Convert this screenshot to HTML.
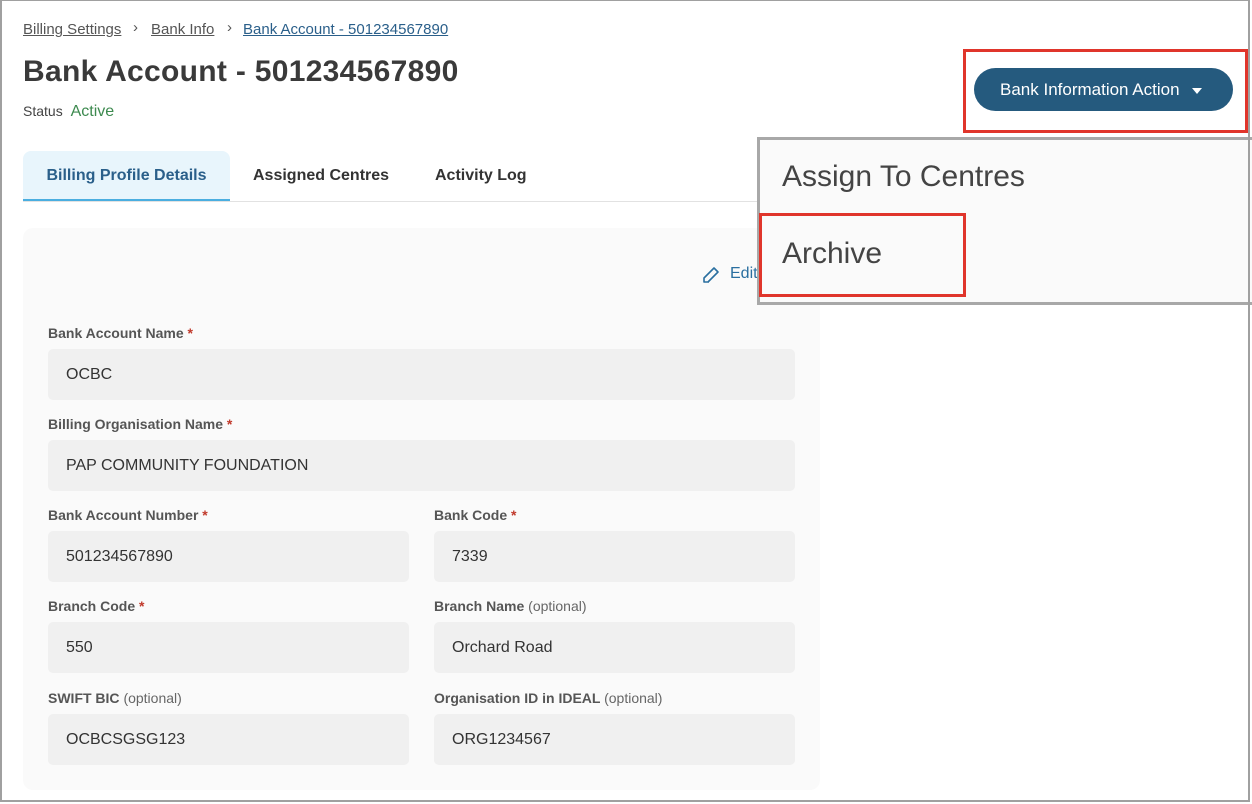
<!DOCTYPE html>
<html><head><style>
*{box-sizing:border-box;margin:0;padding:0}
body{width:1252px;height:804px;background:#fff;font-family:"Liberation Sans",sans-serif;position:relative;overflow:hidden;color:#333}
.frame{position:absolute;left:0;top:0;width:1250px;height:802px;border:2px solid #a0a0a0;border-top-width:1px}
.abs{position:absolute;white-space:nowrap}
.bc{top:21px;font-size:15px;color:#555;text-decoration:underline}
h1{position:absolute;left:23px;top:55px;font-size:30px;font-weight:bold;color:#3a3a3a;letter-spacing:0.3px}
.tab{position:absolute;top:151px;height:50px;font-size:16px;font-weight:bold;color:#333;line-height:50px}
.card{position:absolute;left:23px;top:228px;width:797px;height:562px;background:#fafafa;border-radius:10px}
.lbl{position:absolute;font-size:14px;font-weight:bold;color:#555}
.lbl i{font-style:normal;font-weight:normal;color:#666}
.lbl b{color:#c0392b}
.inp{position:absolute;height:51px;background:#f0f0f0;border-radius:5px;font-size:16px;color:#333;line-height:51px;padding-left:18px}
.w{left:48px;width:747px}.l{left:48px;width:361px}.r{left:434px;width:361px}
</style></head><body>
<div class="abs bc" style="left:23px">Billing Settings</div>
<div class="abs" style="left:133px;top:19px;font-size:15px;color:#555">&#8250;</div>
<div class="abs bc" style="left:151px">Bank Info</div>
<div class="abs" style="left:227px;top:19px;font-size:15px;color:#555">&#8250;</div>
<div class="abs bc" style="left:243px;color:#2a5f8a">Bank Account - 501234567890</div>
<h1>Bank Account - 501234567890</h1>
<div class="abs" style="left:23px;top:103px;font-size:14px;color:#444">Status <span style="color:#3d8a4f;font-size:16px;margin-left:4px">Active</span></div>
<div class="tab" style="left:23px;width:207px;background:#e8f5fc;border-radius:8px 8px 0 0;border-bottom:2px solid #4aaee0;color:#2a5f8a;text-align:center">Billing Profile Details</div>
<div class="tab" style="left:253px">Assigned Centres</div>
<div class="tab" style="left:435px">Activity Log</div>
<div class="abs" style="left:23px;top:201px;width:740px;height:1px;background:#e2e2e2"></div>
<div class="card"></div>
<svg class="abs" style="left:701px;top:265px" width="20" height="20" viewBox="0 0 20 20"><path d="M3 17h5M3 17v-4L13 3l4 4L7 17z" fill="none" stroke="#2a6fa0" stroke-width="1.6" stroke-linejoin="round"/></svg>
<div class="abs" style="left:730px;top:265px;font-size:16px;color:#2a6fa0">Edit</div>
<div class="lbl" style="left:48px;top:325px">Bank Account Name <b>*</b></div>
<div class="inp w" style="top:349px">OCBC</div>
<div class="lbl" style="left:48px;top:416px">Billing Organisation Name <b>*</b></div>
<div class="inp w" style="top:440px">PAP COMMUNITY FOUNDATION</div>
<div class="lbl" style="left:48px;top:507px">Bank Account Number <b>*</b></div>
<div class="lbl" style="left:434px;top:507px">Bank Code <b>*</b></div>
<div class="inp l" style="top:531px">501234567890</div>
<div class="inp r" style="top:531px">7339</div>
<div class="lbl" style="left:48px;top:598px">Branch Code <b>*</b></div>
<div class="lbl" style="left:434px;top:598px">Branch Name <i>(optional)</i></div>
<div class="inp l" style="top:622px">550</div>
<div class="inp r" style="top:622px">Orchard Road</div>
<div class="lbl" style="left:48px;top:690px">SWIFT BIC <i>(optional)</i></div>
<div class="lbl" style="left:434px;top:690px">Organisation ID in IDEAL <i>(optional)</i></div>
<div class="inp l" style="top:714px">OCBCSGSG123</div>
<div class="inp r" style="top:714px">ORG1234567</div>
<div class="abs" style="left:963px;top:49px;width:285px;height:84px;border:3px solid #e0352b"></div>
<div class="abs" style="left:974px;top:68px;width:259px;height:43px;background:#255a7e;border-radius:22px;color:#fff;font-size:17px;line-height:43px;padding-left:26px">Bank Information Action <span style="display:inline-block;margin-left:8px;width:0;height:0;border-left:5px solid transparent;border-right:5px solid transparent;border-top:6px solid #fff;vertical-align:middle"></span></div>
<div class="abs" style="left:757px;top:137px;width:495px;height:168px;background:#fafafa;border:3px solid #a8a8a8;border-right:none"></div>
<div class="abs" style="left:782px;top:160px;font-size:30px;color:#444">Assign To Centres</div>
<div class="abs" style="left:759px;top:213px;width:207px;height:84px;border:3px solid #e0352b"></div>
<div class="abs" style="left:782px;top:237px;font-size:30px;color:#444">Archive</div>
<div class="frame"></div>
</body></html>
